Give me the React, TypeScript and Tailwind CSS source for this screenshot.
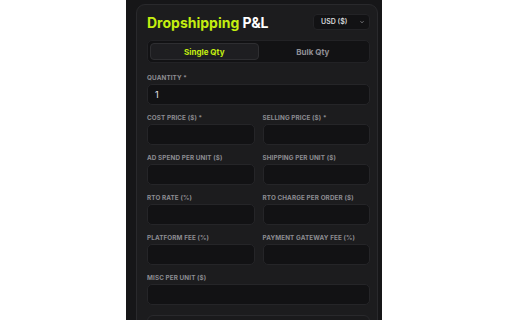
import React from "react";

const Field = ({ label, value = "" }: { label: string; value?: string }) => (
  <div className="flex flex-col gap-[2px]">
    <label className="text-[6.3px] font-bold uppercase tracking-[0.02em] text-[#8d8d92] leading-[7px]">
      {label}
    </label>
    <div className="h-[21px] rounded-[5px] border border-[#252528] bg-[#121214] px-[7px] flex items-center text-[9px] text-[#e8e8ea]">
      {value}
    </div>
  </div>
);

export default function App() {
  return (
    <div className="min-h-[320px] w-full bg-white font-['Inter',sans-serif]">
      <div className="ml-[126px] w-[256px] h-[320px] bg-[#161618] pl-[10px] pr-[4px] pt-[4px] overflow-hidden">
        <div className="rounded-[9px] border border-[#29292c] bg-[#1c1c1e] pl-[10px] pr-[7px] pt-[8px] pb-[10px]">
          <div className="flex items-center justify-between h-[18px]">
            <h1 className="text-[14px] font-bold">
              <span className="text-[#c4ee10]">Dropshipping</span>{" "}
              <span className="text-white">P&amp;L</span>
            </h1>
            <div className="w-[57px] h-[16px] rounded-[4px] bg-[#121214] border border-[#232326] flex items-center justify-between pl-[7px] pr-[4px]">
              <span className="text-[7px] font-semibold text-[#d6d6d8]">USD ($)</span>
              <svg width="6" height="6" viewBox="0 0 24 24" fill="none" stroke="#a0a0a4" strokeWidth="3">
                <path d="M6 9l6 6 6-6" />
              </svg>
            </div>
          </div>

          <div className="mt-[9px] h-[23px] rounded-[5px] bg-[#121214] border border-[#222225] p-[2px] grid grid-cols-2">
            <div className="rounded-[4px] bg-[#1e1e21] border border-[#2e2e31] flex items-center justify-center text-[8px] font-bold text-[#c4ee10]">
              Single Qty
            </div>
            <div className="flex items-center justify-center text-[8px] font-bold text-[#8f8f94]">
              Bulk Qty
            </div>
          </div>

          <div className="mt-[12px] flex flex-col gap-[10px]">
            <Field label="Quantity *" value="1" />
            <div className="grid grid-cols-2 gap-x-[8px]">
              <Field label="Cost Price ($) *" />
              <Field label="Selling Price ($) *" />
            </div>
            <div className="grid grid-cols-2 gap-x-[8px]">
              <Field label="Ad Spend per unit ($)" />
              <Field label="Shipping per unit ($)" />
            </div>
            <div className="grid grid-cols-2 gap-x-[8px]">
              <Field label="RTO Rate (%)" />
              <Field label="RTO Charge per order ($)" />
            </div>
            <div className="grid grid-cols-2 gap-x-[8px]">
              <Field label="Platform Fee (%)" />
              <Field label="Payment Gateway Fee (%)" />
            </div>
            <Field label="Misc per unit ($)" />
            <div className="h-[30px] rounded-[6px] border border-[#29292c] bg-[#1a1a1c]" />
          </div>
        </div>
      </div>
    </div>
  );
}
